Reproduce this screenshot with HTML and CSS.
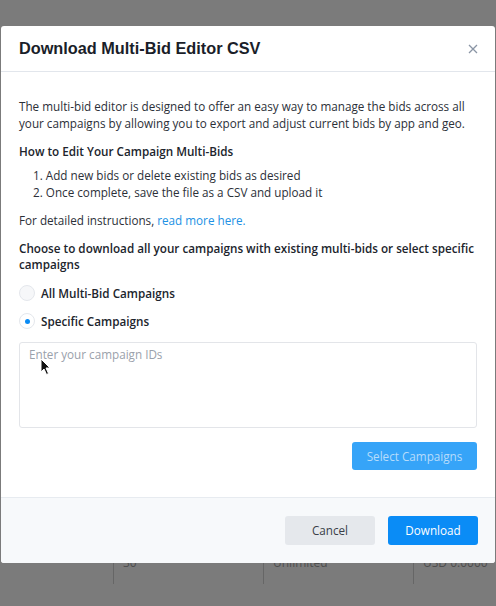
FILE: index.html
```html
<!DOCTYPE html>
<html lang="en">
<head>
    <meta charset="UTF-8">
    <meta name="viewport" content="width=device-width, initial-scale=1.0">
    <title>Download Multi-Bid Editor CSV</title>
    <link rel="stylesheet" href="styles.css">
</head>
<body>
    <!-- campaigns table under the dimmed overlay -->
    <div class="page-table">
        <div class="page-cell"></div>
        <div class="page-cell">30</div>
        <div class="page-cell">Unlimited</div>
        <div class="page-cell">USD 0.0000</div>
    </div>

    <div class="modal">
        <div class="modal-header">
            <h2 class="modal-title">Download Multi-Bid Editor CSV</h2>
            <button class="modal-close" aria-label="Close">
                <svg width="10" height="10" viewBox="0 0 10 10">
                    <path d="M1 1L9 9M9 1L1 9" stroke="#8a95a5" stroke-width="1.3" fill="none"/>
                </svg>
            </button>
        </div>

        <div class="modal-body">
            <p class="intro">The multi-bid editor is designed to offer an easy way to manage the bids across all your campaigns by allowing you to export and adjust current bids by app and geo.</p>

            <h3 class="section-title">How to Edit Your Campaign Multi-Bids</h3>
            <ol class="steps">
                <li>Add new bids or delete existing bids as desired</li>
                <li>Once complete, save the file as a CSV and upload it</li>
            </ol>

            <p class="more">For detailed instructions, <a href="#">read more here.</a></p>

            <h3 class="section-title choose">Choose to download all your campaigns with existing multi-bids or select specific campaigns</h3>

            <label class="radio">
                <input type="radio" name="scope">
                <span class="radio-dot"></span>
                All Multi-Bid Campaigns
            </label>
            <label class="radio">
                <input type="radio" name="scope" checked>
                <span class="radio-dot"></span>
                Specific Campaigns
            </label>

            <textarea class="campaign-ids" placeholder="Enter your campaign IDs"></textarea>

            <div class="select-row">
                <button class="btn btn-primary is-disabled">Select Campaigns</button>
            </div>
        </div>

        <div class="modal-footer">
            <button class="btn btn-secondary">Cancel</button>
            <button class="btn btn-primary">Download</button>
        </div>
    </div>

    <!-- mouse pointer over the text field -->
    <svg class="cursor" width="12" height="18" viewBox="0 0 12 18">
        <path d="M1 1L1 14L4 11L6.5 16.5L8.5 15.5L6 10L10 10Z" fill="#111" stroke="#fff" stroke-width="1"/>
    </svg>
</body>
</html>
```

FILE: styles.css
```css
* {
    margin: 0;
    padding: 0;
    box-sizing: border-box;
}

body {
    font-family: "Open Sans", "Liberation Sans", sans-serif;
    background: #7b7b7b;
    min-height: 100vh;
    color: #2c3038;
    position: relative;
    padding-top: 26px;
}

.page-table {
    position: absolute;
    top: 548px;
    left: 0;
    right: 0;
    display: grid;
    grid-template-columns: 113px 150px 150px 1fr;
    height: 36px;
}

.page-cell {
    border-left: 1px solid #666;
    padding: 6px 9px;
    font-size: 12px;
    color: #4e4e4e;
    white-space: nowrap;
    overflow: hidden;
}

.page-cell:first-child {
    border-left: none;
}

.modal {
    position: relative;
    z-index: 1;
    margin: 0 1px;
    background: #fff;
    border-radius: 3px;
    overflow: hidden;
}

.modal-header {
    height: 46px;
    padding: 0 18px;
    display: flex;
    align-items: center;
    justify-content: space-between;
    border-bottom: 1px solid #e2e6ec;
}

.modal-title {
    font-family: "Liberation Sans", Arial, sans-serif;
    font-size: 16.3px;
    font-weight: 700;
    color: #1a1e29;
}

.modal-close {
    background: none;
    border: none;
    width: 16px;
    height: 16px;
    display: flex;
    align-items: center;
    justify-content: center;
    margin-right: -4px;
}

.modal-body {
    padding: 26px 18px 27px;
    font-size: 11.7px;
    line-height: 17px;
}

.intro {
    margin-bottom: 11px;
}

.section-title {
    font-size: 11.7px;
    font-weight: 600;
    color: #20242c;
    line-height: 17px;
}

.steps {
    margin: 7px 0 11px;
    padding-left: 14px;
    list-style-position: inside;
}

.more {
    margin-bottom: 11px;
}

.more a {
    color: #2191e4;
    text-decoration: none;
}

.choose {
    line-height: 16px;
    margin-bottom: 13px;
}

.radio {
    display: flex;
    align-items: center;
    font-weight: 600;
    color: #20242c;
    height: 16px;
    margin-bottom: 12px;
}

.radio + .radio {
    margin-bottom: 13px;
}

.radio input {
    display: none;
}

.radio-dot {
    width: 16px;
    height: 16px;
    border-radius: 50%;
    border: 1px solid #e4e7ec;
    background: #f6f7f9;
    margin-right: 6px;
    display: flex;
    align-items: center;
    justify-content: center;
}

.radio input:checked + .radio-dot {
    background: #fff;
}

.radio input:checked + .radio-dot::after {
    content: "";
    width: 5px;
    height: 5px;
    border-radius: 50%;
    background: #0a8bf4;
}

.campaign-ids {
    display: block;
    width: 100%;
    height: 86px;
    border: 1px solid #e3e5e9;
    border-radius: 3px;
    padding: 3px 9px;
    font-family: inherit;
    font-size: 11.7px;
    line-height: 17px;
    resize: none;
    outline: none;
}

.campaign-ids::placeholder {
    color: #9aa1ab;
}

.select-row {
    display: flex;
    justify-content: flex-end;
    margin-top: 14px;
}

.btn {
    height: 29px;
    border: none;
    border-radius: 3px;
    font-family: inherit;
    font-size: 11.7px;
    padding: 0 12px;
    white-space: nowrap;
    cursor: pointer;
}

.btn-primary {
    background: #0a8cf6;
    color: #fff;
    width: 90px;
}

.btn-primary.is-disabled {
    background: #36a4f8;
    color: #b6dcfb;
    height: 28px;
    width: 125px;
}

.btn-secondary {
    background: #e5e8ec;
    color: #3a3f48;
    width: 90px;
}

.modal-footer {
    height: 66px;
    background: #f7f9fb;
    border-top: 1px solid #e7ebf0;
    display: flex;
    align-items: center;
    justify-content: flex-end;
    gap: 13px;
    padding: 0 17px 1px;
}

.cursor {
    position: absolute;
    top: 358px;
    left: 40px;
    z-index: 2;
}
```
